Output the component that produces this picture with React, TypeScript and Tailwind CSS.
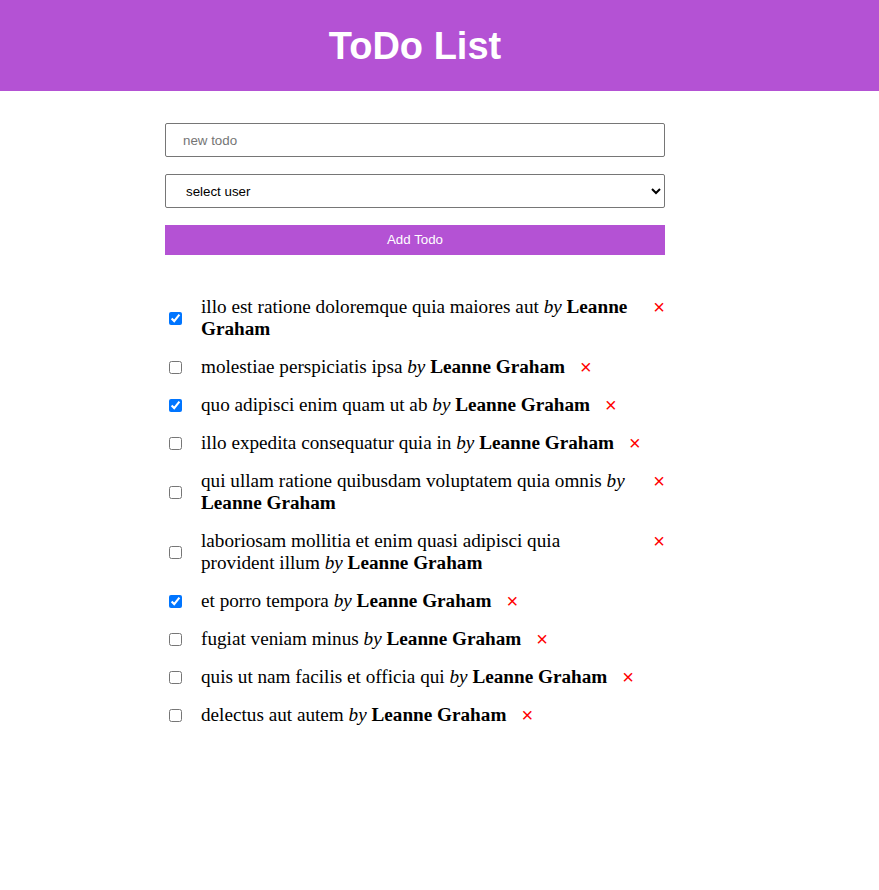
import { useState } from 'react';

interface Todo {
  id: number;
  title: string;
  completed: boolean;
  user: string;
}

const initialTodos: Todo[] = [
  { id: 1, title: 'illo est ratione doloremque quia maiores aut', completed: true, user: 'Leanne Graham' },
  { id: 2, title: 'molestiae perspiciatis ipsa', completed: false, user: 'Leanne Graham' },
  { id: 3, title: 'quo adipisci enim quam ut ab', completed: true, user: 'Leanne Graham' },
  { id: 4, title: 'illo expedita consequatur quia in', completed: false, user: 'Leanne Graham' },
  { id: 5, title: 'qui ullam ratione quibusdam voluptatem quia omnis', completed: false, user: 'Leanne Graham' },
  { id: 6, title: 'laboriosam mollitia et enim quasi adipisci quia provident illum', completed: false, user: 'Leanne Graham' },
  { id: 7, title: 'et porro tempora', completed: true, user: 'Leanne Graham' },
  { id: 8, title: 'fugiat veniam minus', completed: false, user: 'Leanne Graham' },
  { id: 9, title: 'quis ut nam facilis et officia qui', completed: false, user: 'Leanne Graham' },
  { id: 10, title: 'delectus aut autem', completed: false, user: 'Leanne Graham' },
];

export default function App() {
  const [todos, setTodos] = useState<Todo[]>(initialTodos);
  const [text, setText] = useState('');

  const toggle = (id: number) => {
    setTodos(todos.map(t => (t.id === id ? { ...t, completed: !t.completed } : t)));
  };

  const remove = (id: number) => {
    setTodos(todos.filter(t => t.id !== id));
  };

  return (
    <div className="min-h-screen bg-white font-['Liberation_Serif',serif] text-black">
      {/* Header */}
      <header className="h-[91px] bg-[#b452d4] flex items-center">
        <div className="ml-[165px] w-[500px] text-center">
          <h1 className="font-['Liberation_Sans',Arial,sans-serif] text-[38px] font-bold text-white leading-none">
            ToDo List
          </h1>
        </div>
      </header>

      <div className="ml-[165px] w-[500px]">
        {/* Form */}
        <form
          className="mt-8 flex flex-col gap-[17px] font-['Liberation_Sans',Arial,sans-serif] text-[13.33px]"
          onSubmit={e => e.preventDefault()}
        >
          <input
            type="text"
            value={text}
            onChange={e => setText(e.target.value)}
            placeholder="new todo"
            className="h-[34px] w-full rounded-[2px] border border-[#767676] bg-white pl-[17px] placeholder:text-[#757575]"
          />
          <select className="h-[34px] w-full rounded-[2px] border border-[#767676] bg-white pl-4 pr-1 text-black">
            <option>select user</option>
            <option>Leanne Graham</option>
          </select>
          <button type="submit" className="h-[30px] w-full bg-[#b452d4] text-white">
            Add Todo
          </button>
        </form>

        {/* List */}
        <ul className="mt-[41px] flex flex-col gap-4">
          {todos.map(todo => (
            <li key={todo.id} className="flex items-center">
              <input
                type="checkbox"
                checked={todo.completed}
                onChange={() => toggle(todo.id)}
                className="ml-1 mr-[3px] my-[3px] h-[13px] w-[13px] shrink-0"
              />
              <div className="ml-4 flex items-start">
                <span className="text-[19.2px] leading-[22px]">
                  {todo.title} <i>by</i> <b>{todo.user}</b>
                </span>
                <button
                  onClick={() => remove(todo.id)}
                  className="ml-[15px] shrink-0 font-['Liberation_Sans',Arial,sans-serif] text-[20px] leading-[22px] text-[#ff0000]"
                >
                  ×
                </button>
              </div>
            </li>
          ))}
        </ul>
      </div>
    </div>
  );
}
